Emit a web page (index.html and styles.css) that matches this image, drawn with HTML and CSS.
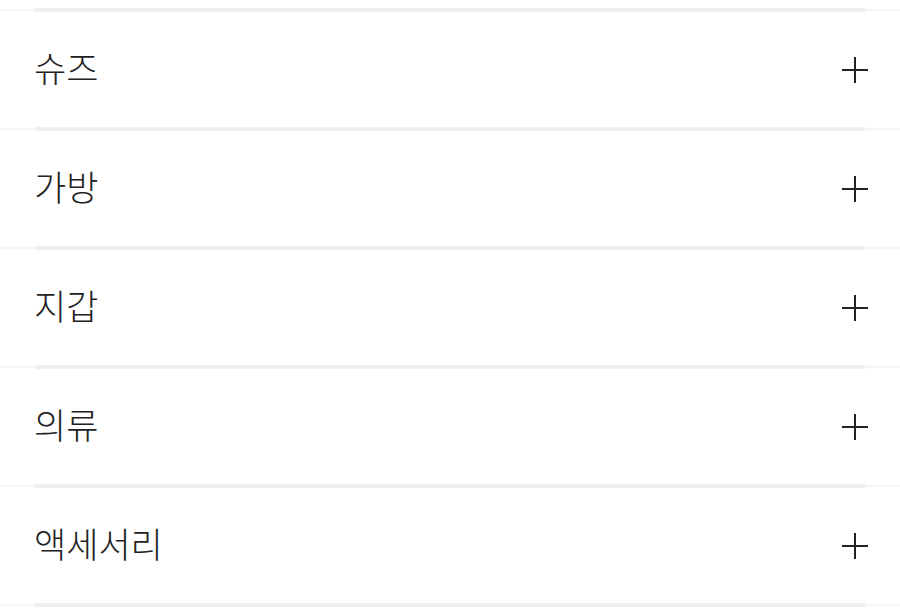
FILE: index.html
```html
<!DOCTYPE html>
<html lang="ko">
<head>
    <meta charset="UTF-8">
    <meta name="viewport" content="width=device-width, initial-scale=1.0">
    <title>카테고리</title>
    <link rel="stylesheet" href="styles.css">
</head>
<body>
    <ul class="categorias">
        <li class="categoria">
            <div class="divisor"><span></span></div>
            <div class="fila"><span class="nombre">슈즈</span><svg class="mas" viewBox="0 0 26 26"><path d="M0 13H26M13 0V26"/></svg></div>
        </li>
        <li class="categoria">
            <div class="divisor"><span></span></div>
            <div class="fila"><span class="nombre">가방</span><svg class="mas" viewBox="0 0 26 26"><path d="M0 13H26M13 0V26"/></svg></div>
        </li>
        <li class="categoria">
            <div class="divisor"><span></span></div>
            <div class="fila"><span class="nombre">지갑</span><svg class="mas" viewBox="0 0 26 26"><path d="M0 13H26M13 0V26"/></svg></div>
        </li>
        <li class="categoria">
            <div class="divisor"><span></span></div>
            <div class="fila"><span class="nombre">의류</span><svg class="mas" viewBox="0 0 26 26"><path d="M0 13H26M13 0V26"/></svg></div>
        </li>
        <li class="categoria">
            <div class="divisor"><span></span></div>
            <div class="fila"><span class="nombre">액세서리</span><svg class="mas" viewBox="0 0 26 26"><path d="M0 13H26M13 0V26"/></svg></div>
        </li>
        <li class="categoria">
            <div class="divisor"><span></span></div>
        </li>
    </ul>
</body>
</html>
```

FILE: styles.css
```css
body {
    font-family: "Noto Sans CJK KR", "Noto Sans", sans-serif;
    background-color: #fff;
    margin: 0;
    padding: 0;
}
.categorias {
    list-style: none;
    margin: 0;
    padding: 8px 0 0;
}
.divisor {
    height: 4px;
    display: flex;
    align-items: center;
    background: linear-gradient(#fff 1px, #f6f6f6 1px, #f6f6f6 3px, #fff 3px);
}
.divisor span {
    display: block;
    flex: 1;
    height: 4px;
    margin: 0 35px;
    background-color: #efefef;
}
.fila {
    height: 115px;
    display: flex;
    justify-content: space-between;
    align-items: center;
    padding: 0 32px 0 34px;
}
.nombre {
    font-size: 35px;
    font-weight: 300;
    color: #222;
    line-height: 1;
    padding-bottom: 6px;
}
.mas {
    width: 26px;
    height: 26px;
    stroke: #222;
    stroke-width: 2;
    fill: none;
}
```
